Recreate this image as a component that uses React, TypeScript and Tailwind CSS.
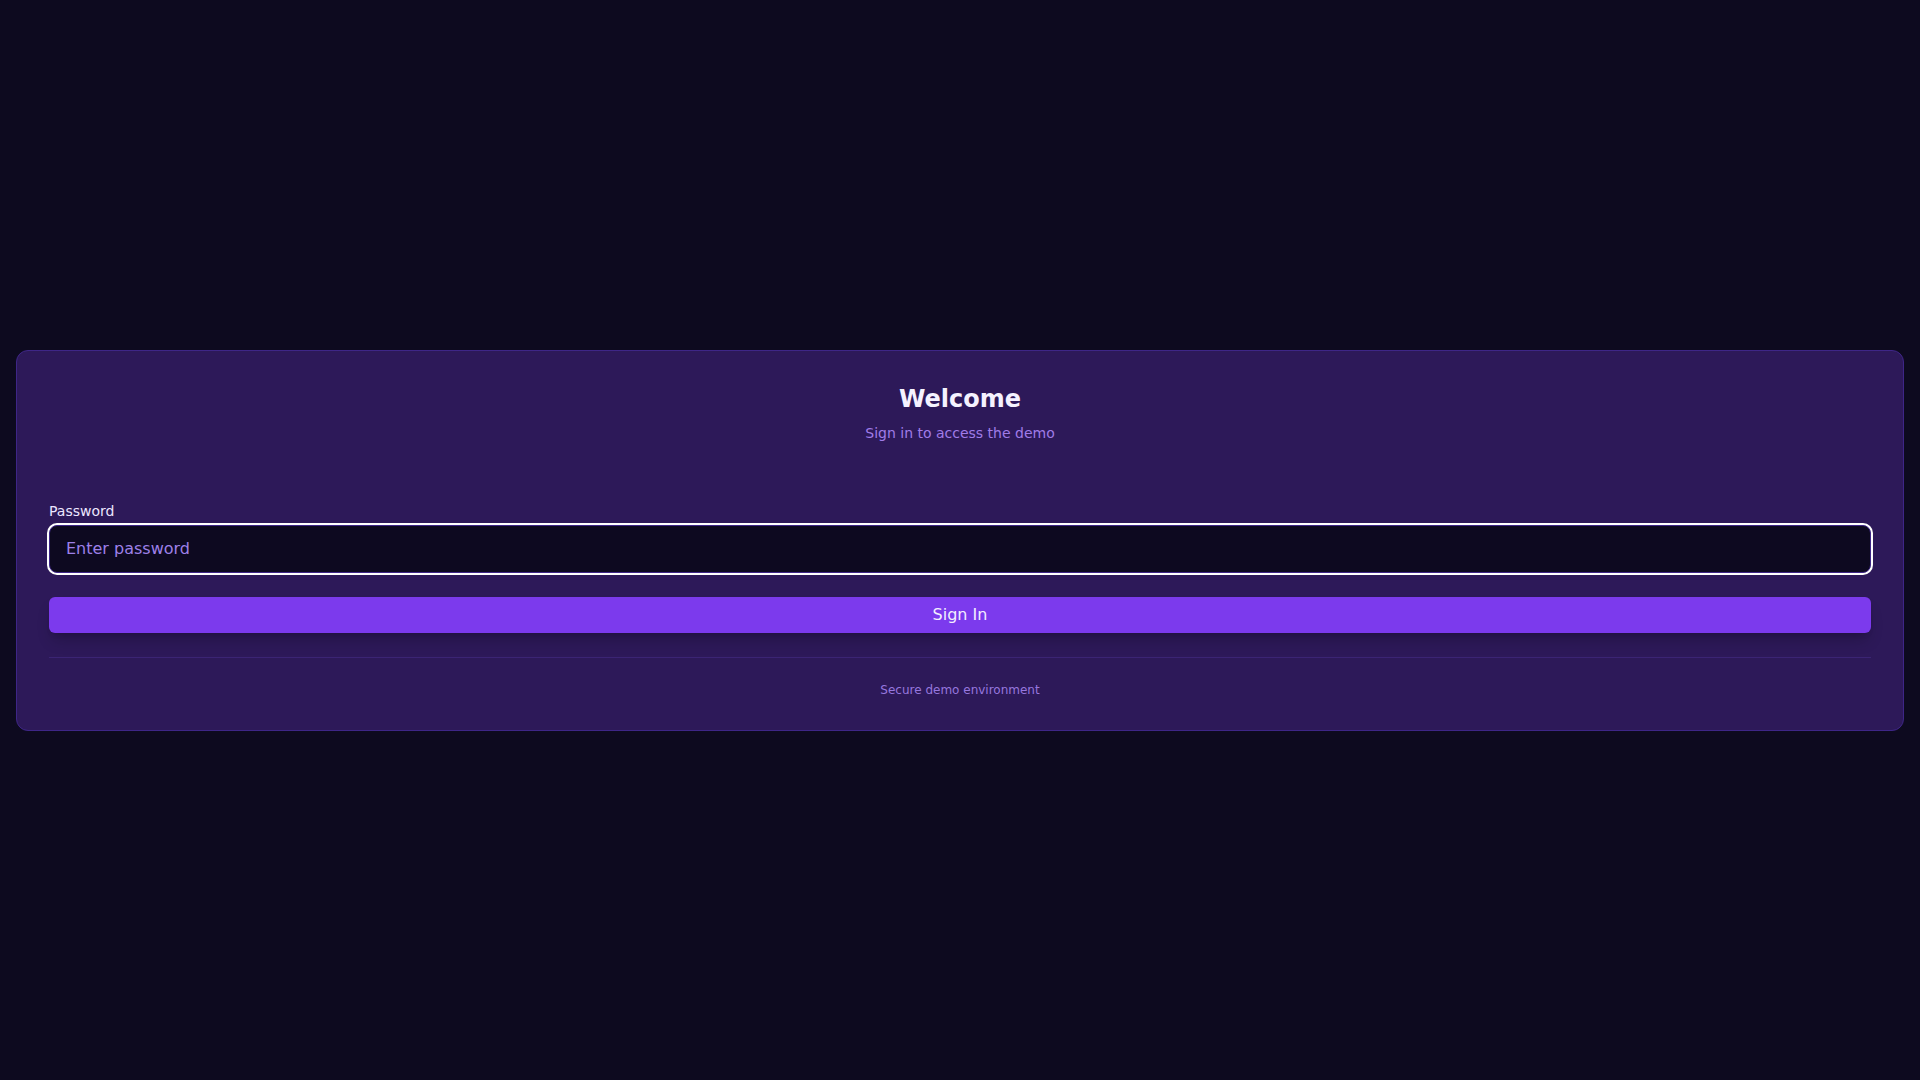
import React from "react";

const LoginCard = () => {
  return (
    <div className="w-full rounded-xl border border-[#3e2687] bg-[#2d1959] p-8">
      <div className="mb-[58px] text-center">
        <h1 className="text-2xl font-bold text-[#f5f2ff]">Welcome</h1>
        <p className="mt-2 text-sm text-[#a07ce8]">Sign in to access the demo</p>
      </div>

      <form onSubmit={(e) => e.preventDefault()}>
        <label htmlFor="password" className="mb-1 block text-sm text-[#ece6ff]">
          Password
        </label>
        <input
          id="password"
          type="password"
          autoFocus
          placeholder="Enter password"
          className="block w-full rounded-lg border border-[#3e2687] bg-[#0d0920] px-4 py-[11px] text-base leading-6 text-white outline-none ring-2 ring-white placeholder:text-[#9d80e8] caret-white"
        />
        <button
          type="submit"
          className="mt-6 w-full rounded-md bg-[#7c3aed] py-1.5 text-base leading-6 text-[#f3eeff] shadow-lg shadow-black/20"
        >
          Sign In
        </button>
      </form>

      <div className="mt-6 border-t border-[#3b2474] pt-6 text-center">
        <p className="text-xs text-[#9677de]">Secure demo environment</p>
      </div>
    </div>
  );
};

export default function App() {
  return (
    <div className="flex min-h-screen items-center bg-[#0d0a1f] p-4 font-['DejaVu_Sans',sans-serif]">
      <LoginCard />
    </div>
  );
}
